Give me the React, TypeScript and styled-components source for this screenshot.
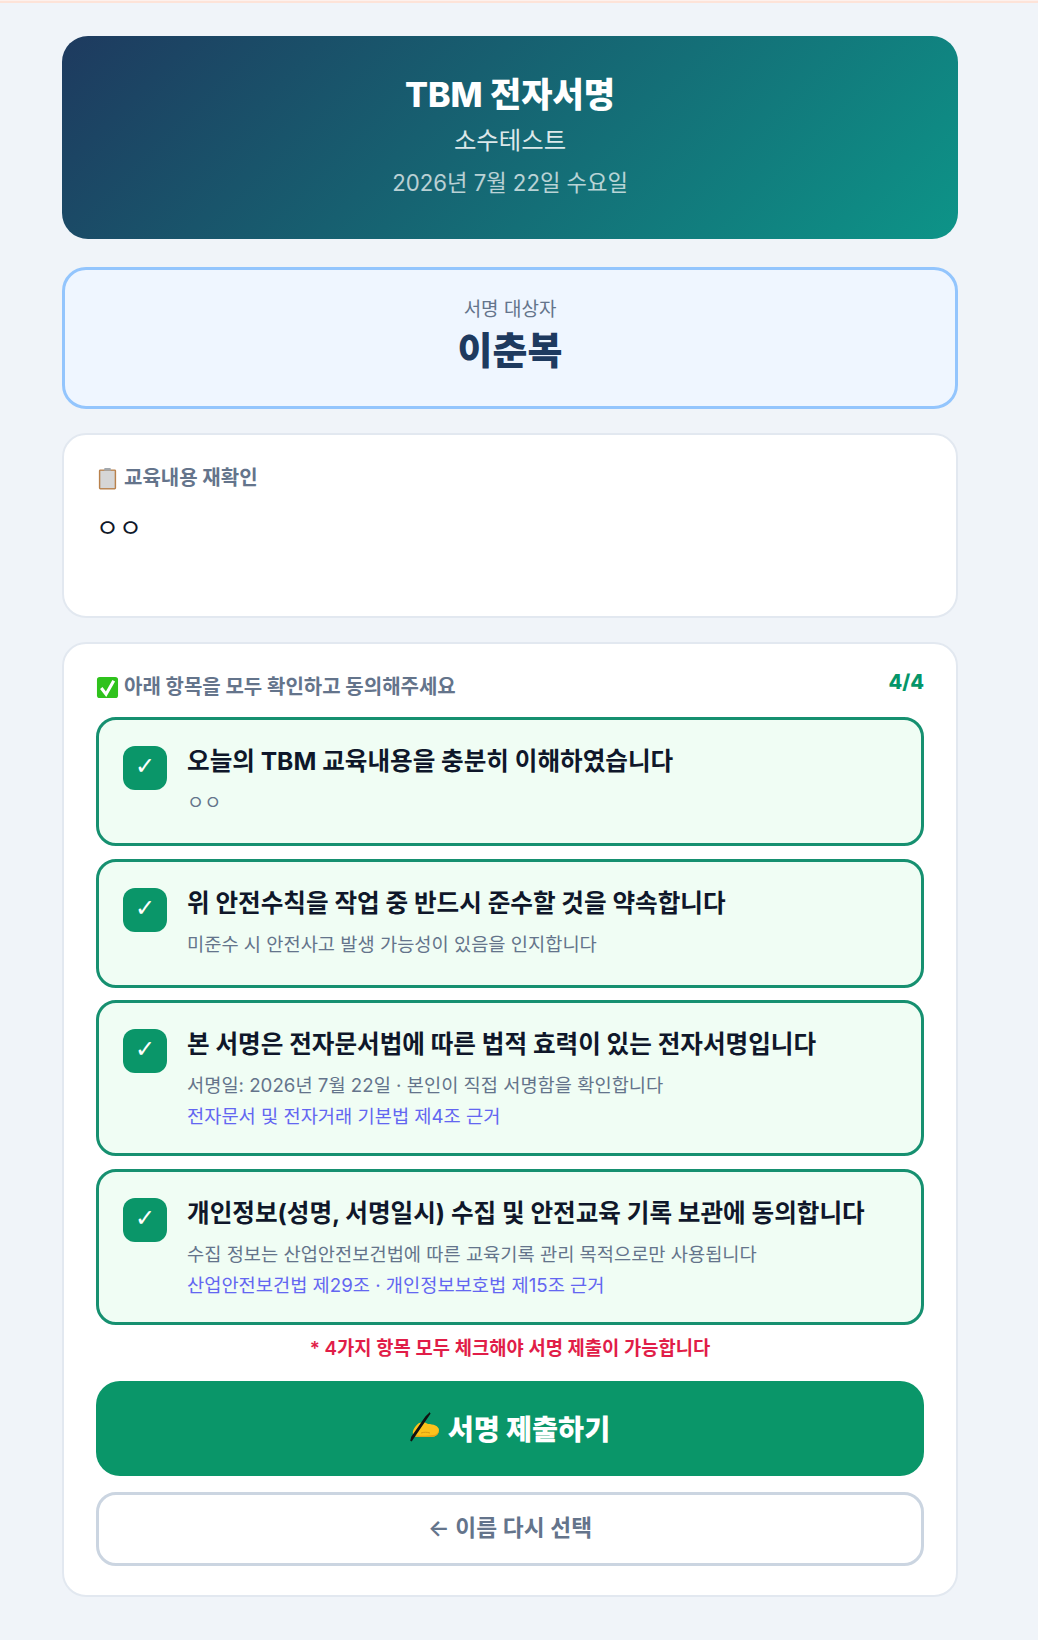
import React from "react";
import styled, { createGlobalStyle } from "styled-components";

const GlobalStyle = createGlobalStyle`
  html, body {
    margin: 0;
    padding: 0;
    background: #f0f4f9;
  }
  * {
    box-sizing: border-box;
  }
`;

const FONT = `Inter, "Noto Sans CJK KR", "Noto Sans", sans-serif`;

const items = [
  {
    title: "오늘의 TBM 교육내용을 충분히 이해하였습니다",
    desc: "ㅇㅇ",
  },
  {
    title: "위 안전수칙을 작업 중 반드시 준수할 것을 약속합니다",
    desc: "미준수 시 안전사고 발생 가능성이 있음을 인지합니다",
  },
  {
    title: "본 서명은 전자문서법에 따른 법적 효력이 있는 전자서명입니다",
    desc: "서명일: 2026년 7월 22일 · 본인이 직접 서명함을 확인합니다",
    legal: "전자문서 및 전자거래 기본법 제4조 근거",
  },
  {
    title: "개인정보(성명, 서명일시) 수집 및 안전교육 기록 보관에 동의합니다",
    desc: "수집 정보는 산업안전보건법에 따른 교육기록 관리 목적으로만 사용됩니다",
    legal: "산업안전보건법 제29조 · 개인정보보호법 제15조 근거",
  },
];

const ClipboardEmoji = () => (
  <EmojiSvg viewBox="0 0 24 24">
    <rect x="3" y="2.5" width="18" height="21" rx="1.5" fill="#b9814c" />
    <rect x="4.5" y="4" width="15" height="18" fill="#d6d6d6" />
    <rect x="8.5" y="1" width="7" height="3" rx="1" fill="#a3a8ad" />
  </EmojiSvg>
);

const CheckEmoji = () => (
  <EmojiSvg viewBox="0 0 24 24">
    <rect x="1" y="1" width="22" height="22" rx="3" fill="#2fc21c" />
    <path d="M5.5 12.5l5 6.5 8-14" fill="none" stroke="#fff" strokeWidth="3.2" />
  </EmojiSvg>
);

const WritingHand = () => (
  <HandSvg viewBox="0 0 30 32">
    <path
      d="M3 20c1-3 3-6 6-8l5-1 4 2c5 0 11 2 11 6 0 4-3 7-8 7H8c-3 0-6-2-5-6z"
      fill="#fcc21b"
    />
    <path d="M4 24c5 1 13 1 19 0 3 0 5-2 6-5 0 4-3 7-8 7H8c-2 0-3-1-4-2z" fill="#e8a317" />
    <path d="M11 22c3-1 6-1 9 0" fill="none" stroke="#d89a12" strokeWidth="1" />
    <path d="M20 2L1 30l1-4 14-20z" fill="#111" stroke="#111" strokeWidth="1.6" />
  </HandSvg>
);

export default function App() {
  return (
    <>
      <GlobalStyle />
      <TopLine />
      <Page>
        <Column>
          <Header>
            <HeaderTitle>TBM 전자서명</HeaderTitle>
            <HeaderSub>소수테스트</HeaderSub>
            <HeaderDate>2026년 7월 22일 수요일</HeaderDate>
          </Header>

          <SignerCard>
            <SignerLabel>서명 대상자</SignerLabel>
            <SignerName>이춘복</SignerName>
          </SignerCard>

          <ContentCard>
            <SectionLabel>
              <ClipboardEmoji />
              교육내용 재확인
            </SectionLabel>
            <ContentText>ㅇㅇ</ContentText>
          </ContentCard>

          <AgreeCard>
            <AgreeHead>
              <SectionLabel>
                <CheckEmoji />
                아래 항목을 모두 확인하고 동의해주세요
              </SectionLabel>
              <Count>4/4</Count>
            </AgreeHead>

            <ItemList>
              {items.map((item) => (
                <Item key={item.title}>
                  <CheckBox>✓</CheckBox>
                  <ItemBody>
                    <ItemTitle>{item.title}</ItemTitle>
                    <ItemDesc>{item.desc}</ItemDesc>
                    {item.legal && <ItemLegal>{item.legal}</ItemLegal>}
                  </ItemBody>
                </Item>
              ))}
            </ItemList>

            <Notice>* 4가지 항목 모두 체크해야 서명 제출이 가능합니다</Notice>
            <SubmitButton>
              <WritingHand />
              서명 제출하기
            </SubmitButton>
            <BackButton>← 이름 다시 선택</BackButton>
          </AgreeCard>
        </Column>
      </Page>
    </>
  );
}

const TopLine = styled.div`
  height: 3px;
  background: #fde3d8;
  border-top: 1px solid #fdf0ec;
`;

const Page = styled.div`
  width: 1020px;
  padding: 33px 0 44px;
  font-family: ${FONT};
`;

const Column = styled.div`
  width: 896px;
  margin: 0 auto;
  display: flex;
  flex-direction: column;
`;

const Header = styled.header`
  height: 203px;
  margin-bottom: 28px;
  padding-top: 35px;
  border-radius: 26px;
  background: linear-gradient(135deg, #1e3a5f, #0d9488);
  display: flex;
  flex-direction: column;
  align-items: center;
  color: #fff;
`;

const HeaderTitle = styled.h1`
  margin: 0 0 3px;
  font-size: 34px;
  line-height: 48px;
  font-weight: 800;
`;

const HeaderSub = styled.div`
  font-size: 24.4px;
  line-height: 36px;
  opacity: 0.85;
`;

const HeaderDate = styled.div`
  margin-top: 7px;
  font-size: 22.2px;
  line-height: 36px;
  opacity: 0.7;
`;

const SignerCard = styled.section`
  height: 142px;
  margin-bottom: 24px;
  padding-top: 25px;
  border: 3px solid #93c5fd;
  border-radius: 24px;
  background: #eff6ff;
  display: flex;
  flex-direction: column;
  align-items: center;
`;

const SignerLabel = styled.div`
  font-size: 19px;
  line-height: 30px;
  color: #64748b;
`;

const SignerName = styled.div`
  margin-top: -1px;
  font-size: 38px;
  line-height: 52px;
  font-weight: 800;
  color: #1e3a5f;
`;

const ContentCard = styled.section`
  height: 185px;
  margin-bottom: 24px;
  padding: 28px 32px;
  border: 2px solid #e2e8f0;
  border-radius: 24px;
  background: #fff;
`;

const AgreeCard = styled.section`
  padding: 28px 32px 29px;
  border: 2px solid #e2e8f0;
  border-radius: 24px;
  background: #fff;
`;

const SectionLabel = styled.div`
  display: flex;
  align-items: center;
  gap: 5px;
  font-size: 20px;
  line-height: 30px;
  font-weight: 700;
  color: #64748b;
`;

const EmojiSvg = styled.svg`
  width: 23px;
  height: 23px;
  flex: none;
`;

const ContentText = styled.div`
  margin-top: 17px;
  font-size: 25px;
  line-height: 36px;
  color: #0f172a;
`;

const AgreeHead = styled.div`
  display: flex;
  justify-content: space-between;
  align-items: flex-start;
  margin-bottom: 15px;
`;

const Count = styled.div`
  font-size: 20px;
  line-height: 20px;
  font-weight: 800;
  color: #059669;
`;

const ItemList = styled.div`
  display: flex;
  flex-direction: column;
  gap: 12.5px;
`;

const Item = styled.div`
  display: flex;
  gap: 20px;
  min-height: 129px;
  padding: 26px 24px 23px;
  border: 3px solid #169070;
  border-radius: 20px;
  background: #f0fdf4;
`;

const CheckBox = styled.div`
  width: 44px;
  height: 44px;
  flex: none;
  padding-bottom: 4px;
  border-radius: 12px;
  background: #0a9669;
  color: #fff;
  display: flex;
  align-items: center;
  justify-content: center;
  font-family: "DejaVu Sans", sans-serif;
  font-size: 24px;
`;

const ItemBody = styled.div`
  min-width: 0;
`;

const ItemTitle = styled.div`
  margin-top: -2px;
  font-size: 24.6px;
  line-height: 35px;
  font-weight: 700;
  color: #0f172a;
`;

const ItemDesc = styled.div`
  margin-top: 10px;
  font-size: 18.7px;
  line-height: 27px;
  color: #64748b;
`;

const ItemLegal = styled.div`
  margin-top: 4px;
  font-size: 18.7px;
  line-height: 27px;
  color: #6366f1;
`;

const Notice = styled.div`
  margin: 9px 0 17px;
  text-align: center;
  font-size: 18.75px;
  line-height: 30px;
  font-weight: 600;
  color: #e11d48;
`;

const SubmitButton = styled.button`
  width: 100%;
  height: 95px;
  padding: 0 0 2px;
  border: 0;
  border-radius: 24px;
  background: #0a9669;
  color: #fff;
  display: flex;
  align-items: center;
  justify-content: center;
  gap: 8px;
  font-family: ${FONT};
  font-size: 28.3px;
  font-weight: 800;
`;

const HandSvg = styled.svg`
  width: 30px;
  height: 32px;
  flex: none;
`;

const BackButton = styled.button`
  width: 100%;
  height: 74px;
  margin-top: 16px;
  padding: 0 0 4px;
  border: 3px solid #cbd5e1;
  border-radius: 20px;
  background: #fff;
  color: #64748b;
  font-family: ${FONT};
  font-size: 22.7px;
  font-weight: 600;
`;
